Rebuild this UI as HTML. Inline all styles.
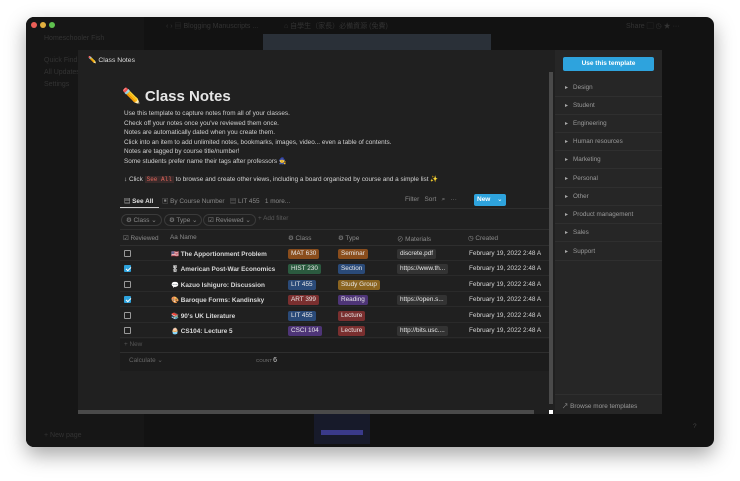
<!DOCTYPE html>
<html><head><meta charset="utf-8"><style>
*{margin:0;padding:0;box-sizing:border-box}
body{width:740px;height:481px;background:#fff;position:relative;overflow:hidden;font-family:"Liberation Sans","Noto Sans CJK SC",sans-serif;}
.abs{position:absolute}
.win{left:26px;top:17px;width:688px;height:430px;background:#121212;border-radius:8px;box-shadow:0 8px 20px rgba(0,0,0,.35);overflow:hidden}
.sb{left:0;top:0;width:118px;height:430px;background:#161616}
.dot{width:6px;height:6px;border-radius:50%;top:5px}
.dim{color:#333;font-size:7px;white-space:nowrap}
.modal{left:78px;top:50px;width:584px;height:364px;background:#202020}
.t{color:#d4d4d4;font-size:6.4px;white-space:nowrap;position:absolute}
.g{color:#8a8a8a}
.pill{position:absolute;font-size:6.4px;color:#e8e8e8;padding:1px 3px;border-radius:2px;height:10px;line-height:8px}
.cb{position:absolute;left:124px;width:7px;height:7px;border:1px solid #999;border-radius:1px}
.cb.on{background:#2ea3dd;border-color:#2ea3dd}
.cb.on:after{content:"";position:absolute;left:1.5px;top:0px;width:2px;height:4px;border:solid #fff;border-width:0 1px 1px 0;transform:rotate(45deg)}
.rp{left:555px;top:50px;width:107px;height:364px;background:#262626}
.cat{position:absolute;left:555px;width:107px;height:18px;border-bottom:1px solid #2f2f2f;color:#9a9a9a;font-size:6.3px;line-height:18px;padding-left:10px}
.cat:before{content:"▸";font-size:6px;margin-right:5px;color:#aaa}
.row{position:absolute;left:120px;width:430px;height:15px;border-bottom:1px solid #2a2a2a}
.n{font-weight:bold;color:#d8d8d8}
</style></head><body>
<div class="abs win">
  <div class="abs sb"></div>
  <div class="abs dot" style="left:5px;background:#ec5f57"></div>
  <div class="abs dot" style="left:14px;background:#e3b03f"></div>
  <div class="abs dot" style="left:23px;background:#5fc14f"></div>
  <div class="abs dim" style="left:140px;top:4px">‹ › ▤ Blogging Manuscripts ...</div>
  <div class="abs dim" style="left:258px;top:4px">⌂ 自學生（家長）必備資源 (免費)</div>
  <div class="abs dim" style="left:600px;top:4px">Share ▢ ◷ ★ ···</div>
  <div class="abs dim" style="left:18px;top:18px">Homeschooler Fish</div>
  <div class="abs dim" style="left:18px;top:40px">Quick Find</div>
  <div class="abs dim" style="left:18px;top:52px">All Updates</div>
  <div class="abs dim" style="left:18px;top:64px">Settings</div>
  <div class="abs dim" style="left:18px;top:415px">+ New page</div>
  <div class="abs" style="left:237px;top:17px;width:228px;height:16px;background:#2a3038"></div>
  <div class="abs" style="left:288px;top:397px;width:56px;height:30px;background:#171a2a"></div>
  <div class="abs" style="left:295px;top:413px;width:42px;height:5px;background:#3a3a8a"></div>
</div>
<div class="abs modal"></div>
<div class="t" style="left:88px;top:56px;color:#ddd;font-size:6.8px">✏️ Class Notes</div>
<div class="t" style="left:122px;top:87px;font-size:15px;font-weight:bold;color:#e6e6e6">✏️ Class Notes</div>
<div class="t" style="left:124px;top:109px;line-height:9.6px;color:#d0d0d0">Use this template to capture notes from all of your classes.<br>Check off your notes once you've reviewed them once.<br>Notes are automatically dated when you create them.<br>Click into an item to add unlimited notes, bookmarks, images, video... even a table of contents.<br>Notes are tagged by course title/number!<br>Some students prefer name their tags after professors 🧙</div>
<div class="t" style="left:124px;top:175px">↓ Click <span style="background:#3a2a2a;color:#e0655a;font-family:'Liberation Mono',monospace;padding:0 2px;font-size:6px">See All</span> to browse and create other views, including a board organized by course and a simple list ✨</div>
<div class="t" style="left:124px;top:196px;font-weight:bold;color:#e0e0e0">▤ See All</div>
<div class="abs" style="left:120px;top:207px;width:39px;height:1.5px;background:#ccc"></div>
<div class="t g" style="left:162px;top:196px">▣ By Course Number &nbsp;&nbsp;▤ LIT 455 &nbsp;&nbsp;1 more...</div>
<div class="t g" style="left:405px;top:196px">Filter &nbsp;&nbsp;Sort &nbsp; ⌕ &nbsp; ···</div>
<div class="abs" style="left:474px;top:194px;width:32px;height:12px;background:#2ea3dd;border-radius:2px;color:#fff;font-size:6.5px;font-weight:bold;line-height:12px;padding-left:3px">New <span style="margin-left:5px;font-weight:normal">⌄</span></div>
<div class="abs" style="left:120px;top:208px;width:430px;border-top:1px solid #2e2e2e"></div>
<div class="t g" style="left:121px;top:214px;border:1px solid #3a3a3a;border-radius:7px;padding:1px 4px">⚙ Class ⌄</div>
<div class="t g" style="left:164px;top:214px;border:1px solid #3a3a3a;border-radius:7px;padding:1px 4px">⚙ Type ⌄</div>
<div class="t g" style="left:203px;top:214px;border:1px solid #3a3a3a;border-radius:7px;padding:1px 4px">☑ Reviewed ⌄</div>
<div class="t" style="left:258px;top:215px;color:#5a5a5a">+ Add filter</div>
<div class="abs" style="left:120px;top:229px;width:430px;border-top:1px solid #2e2e2e"></div>
<div class="t g" style="left:123px;top:234px">☑ Reviewed</div>
<div class="t g" style="left:170px;top:234px">Aa Name</div>
<div class="t g" style="left:288px;top:234px">⚙ Class</div>
<div class="t g" style="left:338px;top:234px">⚙ Type</div>
<div class="t g" style="left:397px;top:234px">⊘ Materials</div>
<div class="t g" style="left:468px;top:234px">◷ Created</div>
<div class="abs" style="left:120px;top:245px;width:430px;border-top:1px solid #2e2e2e"></div>

<div class="row" style="top:246px"></div><div class="row" style="top:261px"></div><div class="row" style="top:277px"></div><div class="row" style="top:292px"></div><div class="row" style="top:308px"></div><div class="row" style="top:323px"></div>

<div class="cb" style="top:250px"></div>
<div class="t n" style="left:171px;top:250px">🇺🇸 The Apportionment Problem</div>
<div class="pill" style="left:288px;top:249px;background:#8a4d1c">MAT 630</div>
<div class="pill" style="left:338px;top:249px;background:#8a4d1c">Seminar</div>
<div class="pill" style="left:397px;top:249px;background:#333">discrete.pdf</div>
<div class="t" style="left:469px;top:250px">February 19, 2022 2:48 A</div>

<div class="cb on" style="top:265px"></div>
<div class="t n" style="left:171px;top:265px">🎖 American Post-War Economics</div>
<div class="pill" style="left:288px;top:264px;background:#2b5a3f">HIST 230</div>
<div class="pill" style="left:338px;top:264px;background:#2a4a78">Section</div>
<div class="pill" style="left:397px;top:264px;background:#333">https://www.th...</div>
<div class="t" style="left:469px;top:265px">February 19, 2022 2:48 A</div>

<div class="cb" style="top:281px"></div>
<div class="t n" style="left:171px;top:281px">💬 Kazuo Ishiguro: Discussion</div>
<div class="pill" style="left:288px;top:280px;background:#2a4a78">LIT 455</div>
<div class="pill" style="left:338px;top:280px;background:#8a6420">Study Group</div>
<div class="t" style="left:469px;top:281px">February 19, 2022 2:48 A</div>

<div class="cb on" style="top:296px"></div>
<div class="t n" style="left:171px;top:296px">🎨 Baroque Forms: Kandinsky</div>
<div class="pill" style="left:288px;top:295px;background:#7a2f2f">ART 399</div>
<div class="pill" style="left:338px;top:295px;background:#4e3577">Reading</div>
<div class="pill" style="left:397px;top:295px;background:#333">https://open.s...</div>
<div class="t" style="left:469px;top:296px">February 19, 2022 2:48 A</div>

<div class="cb" style="top:312px"></div>
<div class="t n" style="left:171px;top:312px">📚 90's UK Literature</div>
<div class="pill" style="left:288px;top:311px;background:#2a4a78">LIT 455</div>
<div class="pill" style="left:338px;top:311px;background:#7a2f2f">Lecture</div>
<div class="t" style="left:469px;top:312px">February 19, 2022 2:48 A</div>

<div class="cb" style="top:327px"></div>
<div class="t n" style="left:171px;top:327px">🧁 CS104: Lecture 5</div>
<div class="pill" style="left:288px;top:326px;background:#4e3577">CSCI 104</div>
<div class="pill" style="left:338px;top:326px;background:#7a2f2f">Lecture</div>
<div class="pill" style="left:397px;top:326px;background:#333">http://bits.usc....</div>
<div class="t" style="left:469px;top:327px">February 19, 2022 2:48 A</div>

<div class="abs" style="left:120px;top:339px;width:430px;height:32px;background:#1c1c1c"></div>
<div class="t" style="left:124px;top:341px;color:#555">+ New</div>
<div class="abs" style="left:120px;top:352px;width:430px;border-top:1px solid #2e2e2e"></div>
<div class="t" style="left:129px;top:356px;color:#666">Calculate ⌄</div>
<div class="t" style="left:256px;top:356px;color:#777;font-size:4.5px;margin-top:1px">COUNT <span style="font-size:7px;color:#ccc">6</span></div>

<div class="abs" style="left:549px;top:72px;width:4px;height:332px;background:#4a4a4a"></div>
<div class="abs" style="left:78px;top:410px;width:456px;height:4px;background:#4a4a4a"></div>
<div class="abs" style="left:549px;top:410px;width:4px;height:4px;background:#fff"></div>

<div class="abs rp"></div>
<div class="abs" style="left:563px;top:57px;width:91px;height:14px;background:#2ea3dd;border-radius:2px;color:#fff;font-size:6.5px;font-weight:bold;text-align:center;line-height:14px">Use this template</div>
<div class="cat" style="top:79px">Design</div>
<div class="cat" style="top:97px">Student</div>
<div class="cat" style="top:115px">Engineering</div>
<div class="cat" style="top:133px">Human resources</div>
<div class="cat" style="top:151px">Marketing</div>
<div class="cat" style="top:170px">Personal</div>
<div class="cat" style="top:188px">Other</div>
<div class="cat" style="top:206px">Product management</div>
<div class="cat" style="top:224px">Sales</div>
<div class="cat" style="top:243px">Support</div>
<div class="abs" style="left:555px;top:394px;width:107px;border-top:1px solid #2f2f2f"></div>
<div class="t" style="left:562px;top:401px;color:#999">↗ Browse more templates</div>
<div class="t" style="left:693px;top:423px;color:#444">?</div>
</body></html>
